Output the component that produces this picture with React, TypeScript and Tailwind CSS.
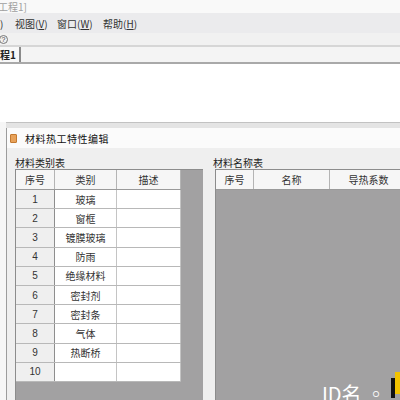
import React from "react";

const categories = ["玻璃", "窗框", "镀膜玻璃", "防雨", "绝缘材料", "密封剂", "密封条", "气体", "热断桥", ""];

const cjk = "font-['Microsoft_YaHei','Noto_Sans_CJK_SC',sans-serif]";

function LeftGrid() {
  return (
    <div className="flex-1 bg-[#a2a1a2] border-l border-t border-[#8c8c8c]">
      <div className="w-[165px]">
        {/* header */}
        <div className="flex h-[20px] bg-[#f6f6f6] border-b border-[#9a9a9a] text-[10px] text-[#333]">
          <div className="w-[39px] flex items-center justify-center border-r border-[#b4b4b4]">序号</div>
          <div className="w-[62px] flex items-center justify-center border-r border-[#b4b4b4]">类别</div>
          <div className="w-[64px] flex items-center justify-center border-r border-[#b4b4b4]">描述</div>
        </div>
        {categories.map((name, i) => (
          <div key={i} className="flex h-[19.2px] border-b border-[#b8b8b8] text-[10px] text-[#333]">
            <div className="w-[39px] flex items-center justify-center bg-[#efefef] border-r border-[#8e8e8e] font-['Liberation_Sans',sans-serif]">
              {i + 1}
            </div>
            <div className="w-[62px] flex items-center justify-center bg-white border-r border-[#c4c4c4]">{name}</div>
            <div className="w-[64px] bg-white border-r border-[#c4c4c4]" />
          </div>
        ))}
      </div>
    </div>
  );
}

function RightGrid() {
  return (
    <div className="flex-1 bg-[#a2a1a2] border-l border-t border-[#8c8c8c] overflow-hidden">
      <div className="flex h-[20px] bg-[#f6f6f6] border-b border-[#9a9a9a] text-[10px] text-[#333] w-[200px]">
        <div className="w-[38px] shrink-0 flex items-center justify-center border-r border-[#b4b4b4]">序号</div>
        <div className="w-[76px] shrink-0 flex items-center justify-center border-r border-[#b4b4b4]">名称</div>
        <div className="w-[78px] shrink-0 flex items-center justify-center border-r border-[#b4b4b4]">导热系数</div>
      </div>
    </div>
  );
}

export default function App() {
  return (
    <div className={`w-[400px] h-[400px] overflow-hidden bg-white relative flex flex-col ${cjk}`}>
      {/* window title */}
      <div className="h-[13px] bg-[#f9f9f9] text-[10px] leading-[13px] text-[#a0a0a0] -ml-[2px]">工程1]</div>

      {/* menu bar */}
      <div className="h-[20px] bg-[#ebebed] flex items-center pt-[1px] text-[10px] text-[#333]">
        <span className="w-[15px]">)</span>
        <span className="w-[42px]">视图(<u>V</u>)</span>
        <span className="w-[46px]">窗口(<u>W</u>)</span>
        <span>帮助(<u>H</u>)</span>
      </div>

      {/* toolbar */}
      <div className="h-[12px] bg-[#f1f1f1] flex items-center">
        <span className="-ml-[1px] w-[9px] h-[9px] rounded-full border border-[#777] text-[7px] leading-[7px] text-[#444] flex items-center justify-center font-['Liberation_Sans',sans-serif]">
          ?
        </span>
      </div>
      <div className="h-[2px] bg-[#d6d6d6]" />

      {/* document tab */}
      <div className="h-[15px] bg-[#f4f4f4] flex">
        <div className="w-[21px] border-r-2 border-[#8a8a8a] bg-[#f8f8f8] text-[10px] leading-[15px] font-bold text-[#222]">程1</div>
      </div>
      <div className="h-[2px] bg-[#a9a9a9]" />

      {/* document area */}
      <div className="h-[58px] bg-white" />

      {/* dialog */}
      <div className="flex-1 flex flex-col bg-[#f6f6f6] pl-[6px]">
        <div className="h-[1px] bg-[#c2c2c2]" />
        <div className="h-[5px] bg-[#e4e4e4]" />
        <div className="flex-1 flex flex-col border-l border-[#9c9c9c] bg-[#efefef]">
          <div className="h-[20px] bg-[#fbfbfb] flex items-center pl-[3px]">
            <span className="w-[7px] h-[9px] bg-[#e8a25a] border border-[#c47a30] rounded-[1px]" />
            <span className="ml-[8px] text-[10px] tracking-[0.5px] text-[#111]">材料热工特性编辑</span>
          </div>
          <div className="flex-1 flex pt-[8px] pl-[8px]">
            <div className="w-[188px] shrink-0 flex flex-col">
              <div className="h-[13px] text-[10px] leading-[13px] text-[#222]">材料类别表</div>
              <LeftGrid />
            </div>
            <div className="ml-[12px] flex-1 min-w-0 flex flex-col">
              <div className="h-[13px] text-[10px] leading-[13px] text-[#222] -ml-[2px]">材料名称表</div>
              <RightGrid />
            </div>
          </div>
        </div>
      </div>

      {/* watermark */}
      <span className="absolute left-[322px] top-[382px] text-[20px] leading-[24px] text-white font-['Noto_Sans_CJK_SC',sans-serif]">
        ID名 ◦
      </span>
      <span className="absolute left-[391px] top-[378px] w-[4px] h-[20px] bg-[#111]" />
      <span className="absolute left-[395px] top-[372px] w-[6px] h-[22px] bg-[#f2c200]" />
    </div>
  );
}
